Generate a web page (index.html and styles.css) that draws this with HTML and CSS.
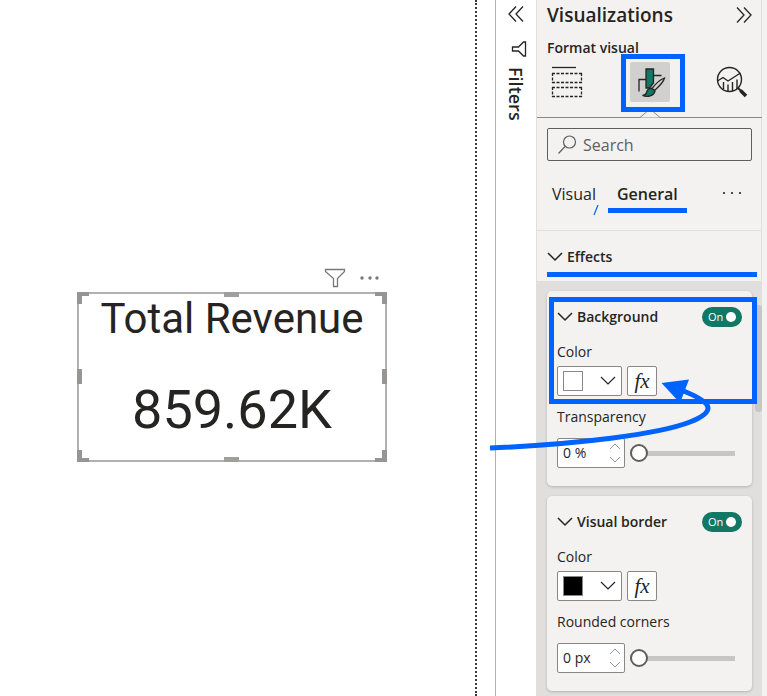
FILE: index.html
```
<!DOCTYPE html>
<html lang="en">
<head>
    <meta charset="UTF-8">
    <meta name="viewport" content="width=device-width, initial-scale=1.0">
    <title>Total Revenue - Format visual</title>
    <link rel="stylesheet" href="styles.css">
</head>
<body>
    <div class="app">
        <!-- Report canvas -->
        <main class="canvas">
            <section class="visual">
                <div class="visual-actions">
                    <button type="button" class="plain" aria-label="Filters on visual">
                        <svg width="22" height="20" viewBox="0 0 22 20"><path d="M1.5 1.5h19v2l-7 7v8h-4v-8l-8-7z" fill="none" stroke="#7a7876" stroke-width="1.3"/></svg>
                    </button>
                    <button type="button" class="plain" aria-label="More options">
                        <svg width="22" height="20" viewBox="0 0 22 20" fill="#7a7876"><circle cx="3" cy="10" r="1.7"/><circle cx="11" cy="10" r="1.7"/><circle cx="18" cy="10" r="1.7"/></svg>
                    </button>
                </div>
                <div class="visual-frame">
                    <h2>Total Revenue</h2>
                    <p>859.62K</p>
                    <span class="corner top left"></span>
                    <span class="corner top right"></span>
                    <span class="corner bottom left"></span>
                    <span class="corner bottom right"></span>
                    <span class="grip-h top"></span>
                    <span class="grip-h bottom"></span>
                    <span class="grip-v left"></span>
                    <span class="grip-v right"></span>
                </div>
            </section>
        </main>

        <!-- Collapsed filters pane -->
        <aside class="filters">
            <button type="button" class="plain" aria-label="Expand filters">
                <svg width="18" height="18" viewBox="0 0 18 18"><path d="M9 1.5L2 9l7 7.5M16 1.5L9 9l7 7.5" fill="none" stroke="#252423" stroke-width="1.3"/></svg>
            </button>
            <svg class="filters-icon" width="16" height="18" viewBox="0 0 16 18"><path d="M14.5 2v14h-2l-5-5h-6V7h6l5-5z" fill="none" stroke="#252423" stroke-width="1.3"/></svg>
            <h2>Filters</h2>
        </aside>

        <!-- Visualizations pane -->
        <aside class="pane">
            <header class="pane-header">
                <h1>Visualizations</h1>
                <button type="button" class="plain" aria-label="Collapse pane">
                    <svg width="18" height="18" viewBox="0 0 18 18"><path d="M2 1.5L9 9l-7 7.5M9 1.5L16 9l-7 7.5" fill="none" stroke="#252423" stroke-width="1.3"/></svg>
                </button>
            </header>

            <h3 class="pane-subtitle">Format visual</h3>

            <div class="modes">
                <button type="button" class="mode" aria-label="Build visual">
                    <svg width="40" height="40" viewBox="0 0 40 40" fill="none" stroke="#252423" stroke-width="1.3">
                        <path d="M5 5.5h24"/>
                        <path d="M5 11.5h30M5 20.5h30M5.5 11v10M34.5 11v10M5 25.5h30M5 34.5h30M5.5 25v10M34.5 25v10" stroke-dasharray="3 1.5"/>
                    </svg>
                </button>
                <button type="button" class="mode active" aria-label="Format visual">
                    <svg width="40" height="40" viewBox="0 0 40 40" fill="none" stroke="#252423" stroke-width="1.3">
                        <path d="M9 29.5v-12h7M23.5 13.5h8"/>
                        <path d="M16 7h7.5v14l-4 5H16z" fill="#117865"/>
                        <path d="M34.5 16c-4 1.5-9.500 6.5-12.500 10.500l2.500 2c4-3.500 9-8.500 10-12.500z" fill="#d2d0ce"/>
                        <path d="M22 26.500c-4-.5-5 2-5.500 4-.5 1.800-2 2.800-4 3 5 2 11.500.5 12.500-4.500z" fill="#117865"/>
                    </svg>
                    <span class="notch"><svg width="20" height="7" viewBox="0 0 20 7"><path d="M0 6.5L7 .5h6l7 6" fill="#f3f2f1" stroke="#8a8886"/></svg></span>
                    <span class="mark-box"></span>
                </button>
                <button type="button" class="mode" aria-label="Analytics">
                    <svg width="40" height="40" viewBox="0 0 40 40" fill="none" stroke="#252423" stroke-width="1.4">
                        <circle cx="17.5" cy="17.5" r="12"/>
                        <path d="M5.5 19l5.5-3.500 5 3.500L28.500 11M11.5 20v7M16 22.500v7M20.500 20v9M25 17.500V27"/>
                        <path d="M26 26l3 3" stroke-width="2"/>
                        <path d="M28.500 28.500l5.500 5.500" stroke-width="3.500"/>
                    </svg>
                </button>
            </div>

            <div class="search">
                <svg width="20" height="20" viewBox="0 0 20 20"><path d="M8 11.5L1.5 18.5" stroke="#605e5c" stroke-width="1.2"/><circle cx="12.5" cy="7" r="6" fill="none" stroke="#605e5c" stroke-width="1.2"/></svg>
                <input type="search" placeholder="Search" aria-label="Search">
            </div>

            <nav class="tabs">
                <a href="#visual" class="tab">Visual
                    <svg class="mark-slash" width="6" height="12" viewBox="0 0 6 12"><path d="M5 1L1 11" stroke="#0062ff" stroke-width="1.2"/></svg>
                </a>
                <a href="#general" class="tab current">General</a>
                <button type="button" class="plain more" aria-label="More options">
                    <svg width="20" height="20" viewBox="0 0 20 20" fill="#252423"><circle cx="2" cy="10" r="1.1"/><circle cx="10" cy="10" r="1.1"/><circle cx="18" cy="10" r="1.1"/></svg>
                </button>
            </nav>

            <button type="button" class="section-title">
                <svg width="16" height="10" viewBox="0 0 16 10"><path d="M1 1l7 7 7-7" fill="none" stroke="#252423" stroke-width="1.5"/></svg>
                Effects
            </button>

            <div class="cards" id="general">
                <span class="scrollbar"></span>

                <section class="card">
                    <div class="card-header">
                        <svg width="16" height="10" viewBox="0 0 16 10"><path d="M1 1l7 7 7-7" fill="none" stroke="#252423" stroke-width="1.5"/></svg>
                        <h4>Background</h4>
                        <label class="toggle"><input type="checkbox" checked aria-label="Background"><span>On</span></label>
                    </div>
                    <span class="label">Color</span>
                    <div class="row color-row">
                        <button type="button" class="color-picker" aria-label="Background color">
                            <span class="swatch white"></span>
                            <svg width="16" height="10" viewBox="0 0 16 10"><path d="M1 1l7 7 7-7" fill="none" stroke="#252423" stroke-width="1.2"/></svg>
                        </button>
                        <button type="button" class="fx">fx</button>
                    </div>
                    <label class="label" for="transparency">Transparency</label>
                    <div class="row value-row">
                        <div class="number">
                            <input type="text" id="transparency" value="0 %">
                            <svg width="12" height="22" viewBox="0 0 12 22"><path d="M1 7l5-5 5 5M1 15l5 5 5-5" fill="none" stroke="#8a9aa3"/></svg>
                        </div>
                        <input type="range" min="0" max="100" value="0" aria-label="Transparency slider">
                    </div>
                    <span class="mark-color"></span>
                    <svg class="mark-arrow" width="230" height="82" viewBox="0 0 230 82">
                        <path d="M3 77C95 73 172 63 203 51C231 40 225 31 194 19" fill="none" stroke="#0062ff" stroke-width="5"/>
                        <path d="M174.5 12L202 8.5L193 32z" fill="#0062ff"/>
                    </svg>
                </section>

                <section class="card">
                    <div class="card-header">
                        <svg width="16" height="10" viewBox="0 0 16 10"><path d="M1 1l7 7 7-7" fill="none" stroke="#252423" stroke-width="1.5"/></svg>
                        <h4>Visual border</h4>
                        <label class="toggle"><input type="checkbox" checked aria-label="Visual border"><span>On</span></label>
                    </div>
                    <span class="label">Color</span>
                    <div class="row color-row">
                        <button type="button" class="color-picker" aria-label="Border color">
                            <span class="swatch black"></span>
                            <svg width="16" height="10" viewBox="0 0 16 10"><path d="M1 1l7 7 7-7" fill="none" stroke="#252423" stroke-width="1.2"/></svg>
                        </button>
                        <button type="button" class="fx">fx</button>
                    </div>
                    <label class="label" for="corners">Rounded corners</label>
                    <div class="row value-row">
                        <div class="number">
                            <input type="text" id="corners" value="0 px">
                            <svg width="12" height="22" viewBox="0 0 12 22"><path d="M1 7l5-5 5 5M1 15l5 5 5-5" fill="none" stroke="#8a9aa3"/></svg>
                        </div>
                        <input type="range" min="0" max="100" value="0" aria-label="Rounded corners slider">
                    </div>
                </section>
            </div>
        </aside>
    </div>
</body>
</html>
```
FILE: styles.css
```
* {
    margin: 0;
    padding: 0;
    box-sizing: border-box;
}

body {
    font-family: "Open Sans", "Noto Sans", sans-serif;
    font-size: 14px;
    line-height: 20px;
    color: #252423;
    background: #fff;
}

button,
input {
    font: inherit;
    color: inherit;
}

svg {
    display: block;
    flex: none;
}

.plain {
    background: none;
    border: none;
    cursor: pointer;
}

.app {
    display: flex;
    min-height: 100vh;
}

/* Report canvas */
.canvas {
    position: relative;
    flex: 1;
    border-right: 2px dotted #3b3a39;
}

.visual {
    position: absolute;
    left: 77px;
    top: 268px;
    width: 310px;
}

.visual-actions {
    display: flex;
    justify-content: flex-end;
    gap: 13px;
    height: 24px;
    padding-right: 6px;
}

.visual-actions button {
    height: 20px;
}

.visual-frame {
    position: relative;
    height: 170px;
    border: 2px solid #b3b1af;
    text-align: center;
}

.visual-frame h2 {
    font: 400 42px/50px Roboto, sans-serif;
}

.visual-frame p {
    margin-top: 34px;
    font: 400 54px/64px Roboto, sans-serif;
}

/* Resize handles */
.corner,
.grip-h,
.grip-v {
    position: absolute;
    border: 0 solid #979593;
}

.corner {
    width: 12px;
    height: 12px;
}

.grip-h {
    left: 50%;
    width: 15px;
    height: 5px;
    margin-left: -8px;
    background: #a19f9d;
}

.grip-v {
    top: 50%;
    width: 5px;
    height: 15px;
    margin-top: -8px;
    background: #979593;
}

.visual-frame .top { top: -2px; }
.visual-frame .bottom { bottom: -2px; }
.visual-frame .left { left: -2px; }
.visual-frame .right { right: -2px; }

.corner.top { border-top-width: 4px; }
.corner.bottom { border-bottom-width: 4px; }
.corner.left { border-left-width: 5px; }
.corner.right { border-right-width: 5px; }

/* Filters pane */
.filters {
    display: flex;
    flex-direction: column;
    align-items: center;
    width: 41px;
    margin-left: 18px;
    padding-top: 5px;
    border-left: 1px solid #b3b0ad;
}

.filters-icon {
    margin: 17px 0 9px 6px;
}

.filters h2 {
    writing-mode: vertical-rl;
    font-size: 18px;
    font-weight: 600;
}

/* Visualizations pane */
.pane {
    width: 231px;
    background: #f3f2f1;
    border-left: 1px solid #e1dfdd;
    border-right: 5px solid #f3f2f1;
    box-shadow: inset -1px 0 #e1dfdd;
}

.pane-header {
    display: flex;
    align-items: center;
    justify-content: space-between;
    height: 30px;
    padding: 0 9px 0 10px;
}

.pane-header h1 {
    font-size: 19px;
    font-weight: 600;
}

.pane-subtitle {
    margin-top: 8px;
    padding: 0 10px;
    font-size: 14px;
    font-weight: 600;
}

.modes {
    display: flex;
    justify-content: space-between;
    padding: 4px 10px 15px;
    border-bottom: 1px solid #8a8886;
}

.mode {
    position: relative;
    width: 40px;
    height: 40px;
    background: none;
    border: none;
    border-radius: 2px;
}

.mode.active {
    background: #d2d0ce;
}

.notch {
    position: absolute;
    left: 10px;
    top: 49px;
}

.mark-box {
    position: absolute;
    left: -9px;
    top: -8px;
    width: 64px;
    height: 58px;
    border: 5px solid #0062ff;
}

.search {
    display: flex;
    align-items: center;
    gap: 6px;
    height: 33px;
    margin: 10px 10px 0;
    padding: 0 9px;
    border: 1px solid #605e5c;
    border-radius: 2px;
}

.search input {
    flex: 1;
    min-width: 0;
    font-size: 16px;
    background: none;
    border: none;
    outline: none;
}

.search input::placeholder {
    color: #605e5c;
}

.tabs {
    display: flex;
    height: 70px;
    padding: 18px 20px 17px 10px;
    border-bottom: 1px solid #e1dfdd;
}

.tab {
    position: relative;
    height: 34px;
    padding: 5px;
    font-size: 16px;
    color: inherit;
    text-decoration: none;
}

.tab.current {
    margin-left: 7px;
    padding: 5px 9px;
    border-bottom: 5px solid #0062ff;
    font-weight: 600;
}

.mark-slash {
    position: absolute;
    right: 2px;
    top: 25px;
}

.more {
    height: 28px;
    margin-left: auto;
}

.section-title {
    display: flex;
    align-items: center;
    gap: 4px;
    width: calc(100% - 15px);
    height: 46px;
    margin: 0 5px 4px 10px;
    padding-top: 10px;
    background: none;
    border: none;
    border-bottom: 5px solid #0062ff;
    font-weight: 600;
}

/* Formatting cards */
.cards {
    position: relative;
    display: flex;
    flex-direction: column;
    gap: 10px;
    padding: 10px 10px 5px;
    background: #e1dfdd;
}

.scrollbar {
    position: absolute;
    right: 0;
    top: 24px;
    width: 7px;
    height: 107px;
    border-radius: 4px;
    background: #c8c6c4;
}

.card {
    position: relative;
    padding: 16px 10px 18px;
    background: #f3f2f1;
    border-radius: 5px;
    box-shadow: 0 1px 3px rgba(0, 0, 0, 0.2);
}

.card-header {
    display: flex;
    align-items: center;
    gap: 4px;
    margin-bottom: 15px;
}

.card-header h4 {
    flex: 1;
    font-size: 14px;
    font-weight: 600;
}

.toggle {
    position: relative;
    display: flex;
    align-items: center;
    width: 40px;
    height: 20px;
    padding-left: 6px;
    border-radius: 10px;
    background: #117865;
    color: #fff;
    font-size: 11px;
}

.toggle input {
    position: absolute;
    right: 6px;
    width: 10px;
    height: 10px;
    appearance: none;
    border-radius: 50%;
    background: #fff;
}

.label {
    display: block;
}

.row {
    display: flex;
    align-items: center;
    gap: 5px;
    height: 30px;
}

.color-row {
    margin: 4px 0 11px;
}

.value-row {
    margin-top: 11px;
}

.color-picker,
.fx,
.number {
    height: 30px;
    background: #fff;
    border: 1px solid #8a8886;
    border-radius: 2px;
}

.color-picker {
    display: flex;
    align-items: center;
    justify-content: space-between;
    width: 65px;
    padding: 0 5px;
}

.swatch {
    width: 20px;
    height: 20px;
    border: 1px solid #8a8886;
}

.swatch.white { background: #fff; }
.swatch.black { background: #000; }

.fx {
    width: 30px;
    font: italic 21px/26px "Liberation Serif", serif;
}

.number {
    display: flex;
    align-items: center;
    width: 68px;
    padding: 0 3px 0 5px;
}

.number input {
    flex: 1;
    min-width: 0;
    background: none;
    border: none;
    outline: none;
}

input[type="range"] {
    width: 105px;
    height: 20px;
    appearance: none;
    background: none;
}

input[type="range"]::-webkit-slider-runnable-track {
    height: 5px;
    background: #c8c6c4;
}

input[type="range"]::-webkit-slider-thumb {
    width: 18px;
    height: 18px;
    margin-top: -7px;
    appearance: none;
    background: #fff;
    border: 2px solid #605e5c;
    border-radius: 50%;
}

/* Callouts drawn over the Background card */
.mark-color {
    position: absolute;
    left: 2px;
    top: 6px;
    width: 208px;
    height: 107px;
    border: 5px solid #0062ff;
}

.mark-arrow {
    position: absolute;
    left: -60px;
    top: 80px;
}

.mark-box,
.mark-color,
.mark-arrow {
    pointer-events: none;
}
```
